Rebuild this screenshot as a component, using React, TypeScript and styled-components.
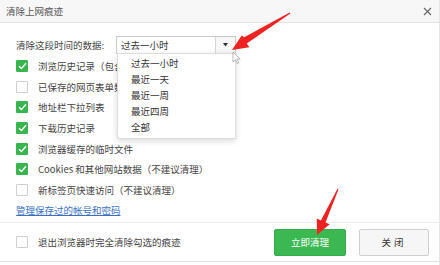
import React from 'react';
import styled, { createGlobalStyle } from 'styled-components';

const GlobalStyle = createGlobalStyle`
  html, body {
    margin: 0;
    padding: 0;
    background: #ffffff;
  }
  body {
    font-family: "Noto Sans CJK SC", "Noto Sans", sans-serif;
    font-size: 9.5px;
    color: #444;
  }
`;

const Dialog = styled.div`
  position: relative;
  width: 440px;
  height: 265px;
  display: flex;
  flex-direction: column;
  background: #fff;
  overflow: hidden;
  border-right: 1px solid #e6e6e6;
  box-sizing: border-box;
`;

const TitleBar = styled.div`
  height: 22px;
  flex-shrink: 0;
  display: flex;
  align-items: center;
  justify-content: space-between;
  padding: 0 7px 0 6px;
  background: #f7f7f7;
  border-bottom: 1px solid #e2e2e2;
  color: #555;
`;

const Body = styled.div`
  padding: 13px 16px 0;
  display: flex;
  flex-direction: column;
  flex: 1;
`;

const TimeRow = styled.div`
  height: 18px;
  display: flex;
  align-items: center;
  margin-bottom: 2px;
`;

const Label = styled.span`
  width: 100px;
  flex-shrink: 0;
`;

const SelectWrap = styled.div`
  position: relative;
  width: 120px;
  height: 18px;
`;

const SelectBox = styled.div`
  box-sizing: border-box;
  width: 100%;
  height: 100%;
  border: 1px solid #c9c9c9;
  display: flex;
  align-items: center;
  background: #fff;
`;

const SelectValue = styled.span`
  flex: 1;
  padding-left: 4px;
  color: #333;
`;

const SelectArrow = styled.span`
  width: 19px;
  height: 100%;
  border-left: 1px solid #d4d4d4;
  background: #f7f7f7;
  display: flex;
  align-items: center;
  justify-content: center;
`;

const Menu = styled.div`
  position: absolute;
  top: 17px;
  left: 1px;
  width: 117px;
  padding: 1px 0 3px;
  background: #fff;
  border: 1px solid #dcdcdc;
  box-shadow: 0 2px 6px rgba(0, 0, 0, 0.15);
  z-index: 2;
`;

const MenuItem = styled.div`
  height: 16px;
  line-height: 16px;
  padding-left: 13px;
  color: #333;
`;

const Row = styled.div`
  height: 20.6px;
  display: flex;
  align-items: center;
`;

const Box = styled.span<{ checked?: boolean }>`
  box-sizing: border-box;
  width: 12px;
  height: 12px;
  border-radius: 1px;
  margin-right: 10px;
  flex-shrink: 0;
  display: flex;
  align-items: center;
  justify-content: center;
  background: ${(p) => (p.checked ? '#38b54c' : '#fff')};
  border: 1px solid ${(p) => (p.checked ? '#38b54c' : '#cfcfcf')};
`;

const Link = styled.a`
  color: #3b6fc6;
  text-decoration: underline;
`;

const Footer = styled.div`
  height: 40px;
  flex-shrink: 0;
  box-sizing: border-box;
  border-top: 1px solid #ececec;
  border-bottom: 1px solid #e0e0e0;
  display: flex;
  align-items: center;
  padding: 0 10px 0 16px;
  margin-bottom: 3px;
`;

const FooterText = styled.span`
  flex: 1;
`;

const Button = styled.button<{ primary?: boolean }>`
  height: 27px;
  width: ${(p) => (p.primary ? '72px' : '70px')};
  margin-left: ${(p) => (p.primary ? '0' : '13px')};
  border-radius: 2px;
  font-family: inherit;
  font-size: 9.5px;
  cursor: pointer;
  background: ${(p) => (p.primary ? '#3cb853' : '#f6f6f6')};
  color: ${(p) => (p.primary ? '#fff' : '#333')};
  border: 1px solid ${(p) => (p.primary ? '#36ad4c' : '#cfcfcf')};
  letter-spacing: ${(p) => (p.primary ? '0' : '3px')};
`;

const Overlay = styled.svg`
  position: absolute;
  left: 0;
  top: 0;
  pointer-events: none;
  z-index: 5;
`;

const Check = () => (
  <svg width="9" height="8" viewBox="0 0 9 8">
    <path d="M1 4.2 L3.5 6.5 L8 1.2" fill="none" stroke="#fff" strokeWidth="1.4" />
  </svg>
);

const options = [
  { text: '浏览历史记录（包含所有网址）', checked: true },
  { text: '已保存的网页表单数据', checked: false },
  { text: '地址栏下拉列表', checked: true },
  { text: '下载历史记录', checked: true },
  { text: '浏览器缓存的临时文件', checked: true },
  { text: 'Cookies 和其他网站数据（不建议清理）', checked: true },
  { text: '新标签页快速访问（不建议清理）', checked: false },
];

const ranges = ['过去一小时', '最近一天', '最近一周', '最近四周', '全部'];

export default function App() {
  return (
    <Dialog>
      <GlobalStyle />
      <TitleBar>
        <span>清除上网痕迹</span>
        <svg width="9" height="9" viewBox="0 0 9 9">
          <path d="M1 1 L8 8 M8 1 L1 8" stroke="#666" strokeWidth="1.1" />
        </svg>
      </TitleBar>
      <Body>
        <TimeRow>
          <Label>清除这段时间的数据:</Label>
          <SelectWrap>
            <SelectBox>
              <SelectValue>过去一小时</SelectValue>
              <SelectArrow>
                <svg width="5" height="4" viewBox="0 0 5 4">
                  <path d="M0 0 L5 0 L2.5 3.5 Z" fill="#333" />
                </svg>
              </SelectArrow>
            </SelectBox>
            <Menu>
              {ranges.map((r) => (
                <MenuItem key={r}>{r}</MenuItem>
              ))}
            </Menu>
          </SelectWrap>
        </TimeRow>
        {options.map((o) => (
          <Row key={o.text}>
            <Box checked={o.checked}>{o.checked && <Check />}</Box>
            <span>{o.text}</span>
          </Row>
        ))}
        <Row>
          <Link>管理保存过的帐号和密码</Link>
        </Row>
      </Body>
      <Footer>
        <Box />
        <FooterText>退出浏览器时完全清除勾选的痕迹</FooterText>
        <Button primary>立即清理</Button>
        <Button>关闭</Button>
      </Footer>
      <Overlay width="440" height="265" viewBox="0 0 440 265">
        <polygon
          points="290.3,13.4 246.8,43.5 249.3,47.3 232,50 241.7,35.5 244.2,37.2 289.7,12.6"
          fill="#ee2222"
        />
        <path
          d="M233 52 L233 62 L235.5 59.8 L237.3 63.5 L238.8 62.8 L237 59.2 L240.2 59 Z"
          fill="#fff"
          stroke="#888"
          strokeWidth="0.6"
        />
        <polygon
          points="338.5,189.2 325.5,222.4 329.6,224.3 317,235 316.8,218.5 320.9,220.4 337.5,188.8"
          fill="#ee2222"
        />
      </Overlay>
    </Dialog>
  );
}
